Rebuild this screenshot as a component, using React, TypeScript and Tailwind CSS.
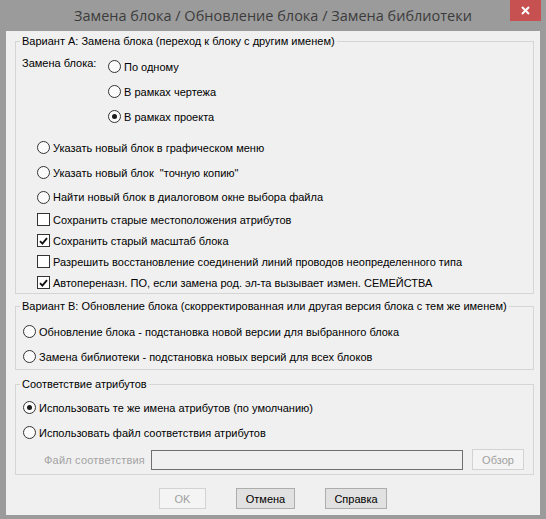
import React from "react";

function Radio({ checked = false }: { checked?: boolean }) {
  return (
    <span className="w-[13px] h-[13px] shrink-0 rounded-full border border-[#333333] bg-[#fbfbfb] flex items-center justify-center">
      {checked && <span className="w-[5px] h-[5px] rounded-full bg-[#1b1b1b]" />}
    </span>
  );
}

function Check({ checked = false }: { checked?: boolean }) {
  return (
    <span className="w-[13px] h-[13px] shrink-0 border border-[#333333] bg-white flex items-center justify-center">
      {checked && (
        <svg width="9" height="8" viewBox="0 0 9 8">
          <path d="M1 4.2 L3.4 6.6 L8 1.2" stroke="#111" strokeWidth="1.9" fill="none" />
        </svg>
      )}
    </span>
  );
}

function RadioRow({ label, checked = false, h = "h-[25px]" }: { label: string; checked?: boolean; h?: string }) {
  return (
    <div className={`flex items-center ${h}`}>
      <Radio checked={checked} />
      <span className="ml-[3px] whitespace-pre">{label}</span>
    </div>
  );
}

function CheckRow({ label, checked = false, h = "h-[21px]" }: { label: string; checked?: boolean; h?: string }) {
  return (
    <div className={`flex items-center ${h}`}>
      <Check checked={checked} />
      <span className="ml-[3px] whitespace-pre">{label}</span>
    </div>
  );
}

export default function App() {
  return (
    <div className="w-[546px] h-[519px] bg-[#9b9b9b] flex flex-col font-['Liberation_Sans',Arial,sans-serif] text-[11px] text-black leading-[14px]">
      {/* Title bar */}
      <div className="relative h-[31px] shrink-0 flex items-center justify-center">
        <span className="font-['Open_Sans',sans-serif] text-[14.5px] leading-[20px] text-[#3b3b3b]">
          Замена блока / Обновление блока / Замена библиотеки
        </span>
        <div className="absolute right-[5px] top-0 w-[31px] h-[21px] bg-[#c75050] flex items-center justify-center">
          <svg width="9" height="9" viewBox="0 0 9 9">
            <path d="M1 1 L8 8 M8 1 L1 8" stroke="#ffffff" strokeWidth="2" />
          </svg>
        </div>
      </div>

      {/* Content */}
      <div className="flex-1 ml-[6px] mr-[6px] mb-[4px] bg-[#f0f0f0] flex flex-col">
        {/* Group A */}
        <fieldset className="mt-[3px] ml-[9px] mr-[6px] border border-[#d5d5d5] pb-0">
          <legend className="ml-[4px] px-[2px] leading-[14px]">Вариант А: Замена блока (переход к блоку с другим именем)</legend>
          <div className="flex pt-[6px]">
            <div className="w-[92px] pl-[6px] pt-[2px] whitespace-nowrap">Замена блока:</div>
            <div className="flex flex-col">
              <RadioRow label="По одному" />
              <RadioRow label="В рамках чертежа" />
              <RadioRow label="В рамках проекта" checked />
            </div>
          </div>
          <div className="flex flex-col pl-[21px] mt-[6px]">
            <RadioRow label="Указать новый блок в графическом меню" />
            <RadioRow label='Указать новый блок  "точную копию"' />
            <RadioRow label="Найти новый блок в диалоговом окне выбора файла" h="h-[24px]" />
            <CheckRow label="Сохранить старые местоположения атрибутов" />
            <CheckRow label="Сохранить старый масштаб блока" checked />
            <CheckRow label="Разрешить восстановление соединений линий проводов неопределенного типа" />
            <CheckRow label="Автопереназн. ПО, если замена род. эл-та вызывает измен. СЕМЕЙСТВА" checked />
          </div>
        </fieldset>

        {/* Group B */}
        <fieldset className="mt-[5px] ml-[9px] mr-[6px] border border-[#d5d5d5]">
          <legend className="ml-[4px] px-[2px] leading-[14px]">
            Вариант В: Обновление блока (скорректированная или другая версия блока с тем же именем)
          </legend>
          <div className="flex flex-col pl-[7px] pt-[6px]">
            <RadioRow label="Обновление блока - подстановка новой версии для выбранного блока" />
            <RadioRow label="Замена библиотеки - подстановка новых версий для всех блоков" />
          </div>
        </fieldset>

        {/* Group C */}
        <fieldset className="mt-[7px] ml-[9px] mr-[6px] border border-[#d5d5d5]">
          <legend className="ml-[4px] px-[2px] leading-[14px]">Соответствие атрибутов</legend>
          <div className="flex flex-col pl-[7px] pt-[4px]">
            <RadioRow label="Использовать те же имена атрибутов (по умолчанию)" checked />
            <RadioRow label="Использовать файл соответствия атрибутов" />
          </div>
          <div className="flex items-center mt-[4px] mb-[4px] pl-[28px] pr-[9px]">
            <div className="w-[107px] text-[#a3a3a3] whitespace-nowrap tracking-[0.2px]">Файл соответствия</div>
            <div className="flex-1 h-[20px] border border-[#6f6f6f] bg-[#f0f0f0]" />
            <div className="ml-[9px] w-[52px] h-[21px] border border-[#d3d3d3] bg-[#f4f4f4] text-[#a0a0a0] flex items-center justify-center">
              Обзор
            </div>
          </div>
        </fieldset>

        {/* Buttons */}
        <div className="flex justify-center gap-[30px] mt-[13px]">
          <div className="w-[47px] h-[21px] border border-[#d3d3d3] bg-[#f4f4f4] text-[#a0a0a0] flex items-center justify-center">
            OK
          </div>
          <div className="w-[59px] h-[21px] border border-[#adadad] bg-[#e1e1e1] flex items-center justify-center">
            Отмена
          </div>
          <div className="w-[62px] h-[21px] border border-[#adadad] bg-[#e1e1e1] flex items-center justify-center">
            Справка
          </div>
        </div>
      </div>
    </div>
  );
}
